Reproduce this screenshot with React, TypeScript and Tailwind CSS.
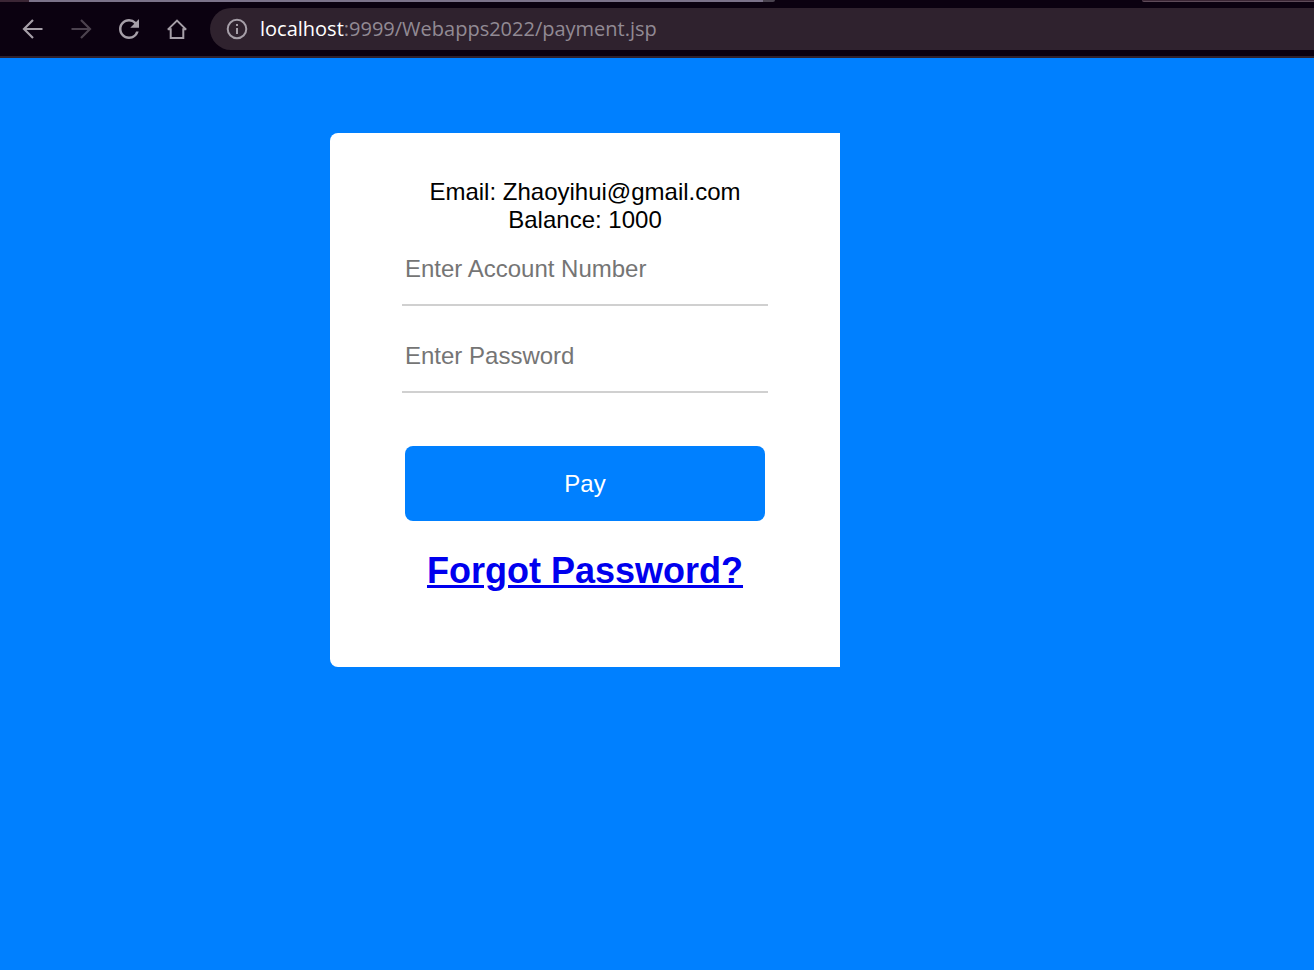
import type { ReactNode } from "react";

function ToolButton({ label, dim, children }: { label: string; dim?: boolean; children: ReactNode }) {
  return (
    <button
      type="button"
      aria-label={label}
      disabled={dim}
      className={`flex h-6 w-6 items-center justify-center ${dim ? "text-[#4c424f]" : "text-[#a69fa8]"}`}
    >
      <svg viewBox="0 0 24 24" className="h-6 w-6" fill="none" stroke="currentColor" strokeWidth="2.2">
        {children}
      </svg>
    </button>
  );
}

function BrowserBar() {
  return (
    <header className="border-b-2 border-[#2f222e] bg-[#0b0110] font-['Open_Sans','Noto_Sans',sans-serif]">
      <div className="flex h-0.5 w-full">
        <div className="w-[29px] bg-[#3b2635]" />
        <div className="w-[56%] max-w-[734px] bg-[#7b7289]" />
        <div className="mr-auto w-3 rounded-br-xs bg-[#4a4350]" />
        <div className="w-[172px] rounded-bl-xs border-b border-[#5e4b59] bg-[#3b2635]" />
      </div>
      <div className="flex items-center py-1.5">
        <nav aria-label="Browser navigation" className="flex gap-6 pr-5 pl-[21px]">
          <ToolButton label="Back">
            <path d="M21.5 12H3.5M12 3l-9 9 9 9" />
          </ToolButton>
          <ToolButton label="Forward" dim>
            <path d="M2.5 12h18M12 3l9 9-9 9" />
          </ToolButton>
          <ToolButton label="Reload">
            <path
              transform="translate(-3 -3) scale(1.25)"
              fill="currentColor"
              stroke="none"
              d="M17.65 6.35A7.958 7.958 0 0 0 12 4c-4.42 0-7.99 3.58-7.99 8s3.57 8 7.99 8c3.73 0 6.84-2.55 7.73-6h-2.08A5.99 5.99 0 0 1 12 18c-3.31 0-6-2.69-6-6s2.69-6 6-6c1.66 0 3.14.69 4.22 1.78L13 11h7V4l-2.35 2.35z"
            />
          </ToolButton>
          <ToolButton label="Home">
            <path d="M2.8 12.6L12 3.6l9.2 9M2.8 12.2h2.9v8.8h12.6v-8.8h2.9" strokeWidth="2" />
          </ToolButton>
        </nav>
        <div className="ml-px flex h-[42px] flex-1 items-center gap-3 rounded-l-full bg-[#2f222e] pl-4">
          <svg viewBox="0 0 22 22" className="h-[22px] w-[22px] text-[#a69fa8]" fill="none" stroke="currentColor" strokeWidth="2" aria-hidden="true">
            <circle cx="11" cy="11" r="9.3" />
            <path d="M11 10v6M11 6v2" />
          </svg>
          <p className="text-[20px] leading-7 whitespace-nowrap text-[#928a94]">
            <span className="text-white">localhost</span>:9999/Webapps2022/payment.jsp
          </p>
        </div>
      </div>
    </header>
  );
}

const fieldClass =
  "block h-[72px] w-full border-b-2 border-[#d0d0d0] bg-transparent px-[3px] text-2xl text-black outline-none placeholder:text-[#757575]";

export default function App() {
  return (
    <div className="flex min-h-screen flex-col bg-[#0080ff] font-['Liberation_Sans',Arial,sans-serif] text-black">
      <BrowserBar />
      <main className="px-4 py-[75px] lg:pl-[330px]">
        <form
          className="flex w-full max-w-[510px] flex-col rounded-l-lg bg-white px-[72px] pt-[45px] pb-[75px]"
          onSubmit={(e) => e.preventDefault()}
        >
          <div className="text-center text-2xl leading-7">
            <p>Email: Zhaoyihui@gmail.com</p>
            <p>Balance: 1000</p>
          </div>
          <div className="flex flex-col gap-[15px]">
            <input type="text" aria-label="Account number" placeholder="Enter Account Number" className={fieldClass} />
            <input type="password" aria-label="Password" placeholder="Enter Password" className={fieldClass} />
          </div>
          <button type="submit" className="mx-[3px] mt-[53px] h-[75px] rounded-lg bg-[#0080ff] text-2xl text-white">
            Pay
          </button>
          <h2 className="mt-[29px] text-center text-4xl leading-[42px] font-bold">
            <a href="#forgot" className="text-[#0000ee] underline">
              Forgot Password?
            </a>
          </h2>
        </form>
      </main>
    </div>
  );
}
